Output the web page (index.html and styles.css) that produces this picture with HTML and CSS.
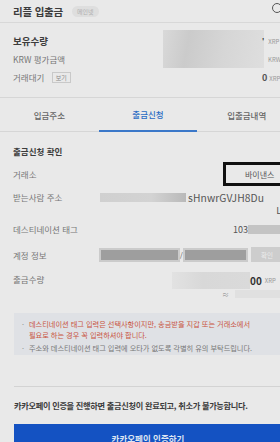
FILE: index.html
```html
<!DOCTYPE html>
<html lang="ko">
<head>
    <meta charset="UTF-8">
    <meta name="viewport" content="width=device-width, initial-scale=1.0">
    <title>리플 입출금</title>
    <link rel="stylesheet" href="styles.css">
</head>
<body>
    <div class="page">
        <div class="header">
            <h1>리플 입출금</h1>
            <span class="badge">메인넷</span>
            <span class="search-icon"></span>
        </div>

        <div class="holdings">
            <div class="holdings-labels">
                <p class="label-strong">보유수량</p>
                <p class="label">KRW 평가금액</p>
                <p class="label">거래대기 <span class="small-btn">보기</span></p>
            </div>
            <div class="holdings-blur"></div>
            <div class="holdings-units">
                <p><b class="tick">'</b><span>XRP</span></p>
                <p class="unit-krw"><span>KRW</span></p>
                <p><b>0</b><span>XRP</span></p>
            </div>
        </div>

        <div class="tabs">
            <div class="tab">입금주소</div>
            <div class="tab active">출금신청</div>
            <div class="tab">입출금내역</div>
        </div>

        <div class="confirm">
            <h2>출금신청 확인</h2>

            <div class="row row-exchange">
                <span class="label">거래소</span>
                <div class="exchange-box">바이낸스</div>
            </div>

            <div class="row row-address">
                <span class="label">받는사람 주소</span>
                <div class="address">
                    <div class="address-line"><span class="blur blur-address"></span><span>sHnwrGVJH8Du</span></div>
                    <div class="address-end">Ll</div>
                </div>
            </div>

            <div class="row row-tag">
                <span class="label">데스티네이션 태그</span>
                <div class="value-right"><span>103</span><span class="blur blur-tag"></span></div>
            </div>

            <div class="row row-account">
                <span class="label">계정 정보</span>
                <div class="account">
                    <span class="field field-a"></span>
                    <span class="slash">/</span>
                    <span class="field field-b"></span>
                    <span class="check-btn">확인</span>
                </div>
            </div>

            <div class="row row-amount">
                <span class="label">출금수량</span>
                <div class="amount">
                    <div class="amount-main"><span class="blur blur-amount"></span><b>00</b><span class="unit">XRP</span></div>
                    <div class="amount-sub"><span>≈</span><span class="blur blur-krw"></span><span class="unit">KRW</span></div>
                </div>
            </div>
        </div>

        <div class="notice">
            <p class="notice-red">데스티네이션 태그 입력은 선택사항이지만, 송금받을 지갑 또는 거래소에서<br>필요로 하는 경우 꼭 입력하셔야 합니다.</p>
            <p>주소와 데스티네이션 태그 입력에 오타가 없도록 각별히 유의 부탁드립니다.</p>
        </div>

        <div class="divider"></div>

        <p class="final-note">카카오페이 인증을 진행하면 출금신청이 완료되고, 취소가 불가능합니다.</p>

        <div class="submit">카카오페이 인증하기</div>
    </div>
</body>
</html>
```

FILE: styles.css
```css
* {
    margin: 0;
    padding: 0;
    box-sizing: border-box;
}

body {
    font-family: 'Noto Sans CJK KR', 'Noto Sans', sans-serif;
    background: #e9e9e9;
    color: #4a4a4a;
    overflow: hidden;
    width: 280px;
    height: 442px;
}

.page {
    width: 296px;
    background: #e9e9e9;
}

/* header */
.header {
    height: 23px;
    display: flex;
    align-items: center;
    padding: 0 13px;
    border-bottom: 1px solid #d8d8d8;
    position: relative;
}

h1 {
    font-size: 10.5px;
    font-weight: 700;
    color: #3c3c3c;
    letter-spacing: -0.2px;
}

.badge {
    margin-left: 9px;
    font-size: 6px;
    color: #b0b0b0;
    background: #dedede;
    border-radius: 6px;
    padding: 1px 5px;
    line-height: 9px;
}

.search-icon {
    position: absolute;
    left: 272px;
    top: 3px;
    width: 10px;
    height: 10px;
    border: 1.6px solid #555;
    border-radius: 50%;
}

/* holdings */
.holdings {
    display: flex;
    padding: 12px 0 0 13px;
    height: 75px;
    border-bottom: 1px solid #d6d6d6;
}

.holdings-labels {
    width: 150px;
    flex-shrink: 0;
    display: flex;
    flex-direction: column;
    gap: 5px;
}

.holdings-labels p {
    height: 13px;
    line-height: 13px;
}

.label-strong {
    font-size: 9.5px;
    font-weight: 700;
    color: #3c3c3c;
}

.label {
    font-size: 8.5px;
    color: #777;
}

.small-btn {
    display: inline-block;
    margin-left: 5px;
    font-size: 6px;
    line-height: 9px;
    padding: 0 3px;
    border: 1px solid #c9c9c9;
    color: #888;
    vertical-align: 1px;
}

.holdings-blur {
    width: 101px;
    flex-shrink: 0;
    height: 38px;
    margin-top: -5px;
    background: linear-gradient(100deg, #d9d9d9 0%, #cbcbcb 25%, #d6d6d6 60%, #dedede 100%);
}

.holdings-units {
    margin-left: -2px;
    display: flex;
    flex-direction: column;
    gap: 5px;
}

.holdings-units p {
    height: 13px;
    line-height: 13px;
    font-size: 6px;
    color: #999;
    white-space: nowrap;
}

.holdings-units b {
    font-size: 9px;
    color: #555;
    margin-right: 2px;
}

.holdings-units .tick {
    font-size: 7px;
    color: #333;
    margin-right: 4px;
}

.holdings-units .unit-krw {
    padding-left: 6px;
}

/* tabs */
.tabs {
    display: flex;
    height: 34px;
    border-bottom: 1px solid #d6d6d6;
}

.tab {
    flex: 1;
    display: flex;
    align-items: center;
    justify-content: center;
    font-size: 8.5px;
    color: #666;
    font-weight: 500;
}

.tab.active {
    color: #2b6cc4;
    border-bottom: 2px solid #3b78c9;
    margin-bottom: -1px;
}

/* confirm */
.confirm {
    padding: 13px 0 0 13px;
}

h2 {
    font-size: 8.5px;
    font-weight: 700;
    color: #3c3c3c;
    line-height: 12px;
}

.row {
    display: flex;
    align-items: flex-start;
}

.row > .label {
    width: 87px;
    flex-shrink: 0;
    font-size: 8.5px;
    color: #777;
    line-height: 12px;
}

.row-exchange {
    margin-top: 5px;
    align-items: center;
}

.exchange-box {
    margin-left: 123px;
    width: 60px;
    height: 24px;
    border: 3px solid #111;
    border-right: none;
    font-size: 8px;
    color: #555;
    display: flex;
    align-items: center;
    padding-left: 19px;
    white-space: nowrap;
}

.row-address {
    margin-top: 5px;
}

.address {
    flex: 1;
}

.address-line {
    display: flex;
    align-items: center;
    height: 13px;
    font-size: 10.3px;
    color: #555;
    white-space: nowrap;
    letter-spacing: 0.1px;
}

.blur {
    display: inline-block;
    background: #cfcfcf;
}

.blur-address {
    width: 86px;
    height: 9px;
    margin-right: 2px;
    background: linear-gradient(90deg, #d0d0d0, #d3d3d3 60%, #b9b9b9);
}

.address-end {
    text-align: right;
    padding-right: 12px;
    font-size: 9.5px;
    color: #555;
    line-height: 12px;
}

.row-tag {
    margin-top: 7px;
}

.value-right {
    margin-left: 133px;
    display: flex;
    align-items: center;
    height: 12px;
    font-size: 9px;
    color: #555;
}

.blur-tag {
    width: 50px;
    height: 9px;
    background: #c4c4c4;
}

.row-account {
    margin-top: 12px;
    align-items: center;
}

.account {
    display: flex;
    align-items: center;
    margin-left: -1px;
}

.field {
    height: 14px;
    border: 2px solid #cbcbcb;
    background: #9e9e9e;
}

.field-a {
    width: 81px;
}

.field-b {
    width: 65px;
}

.slash {
    font-size: 7px;
    color: #555;
    width: 3px;
}

.check-btn {
    margin-left: 3px;
    width: 32px;
    height: 15px;
    background: #cdcdcd;
    color: #ececec;
    font-size: 6.5px;
    display: flex;
    align-items: center;
    justify-content: center;
}

.row-amount {
    margin-top: 11px;
}

.amount {
    flex: 1;
}

.amount-main {
    display: flex;
    align-items: center;
    height: 15px;
    margin-left: 72px;
}

.blur-amount {
    width: 78px;
    height: 17px;
    background: linear-gradient(90deg, #e2e2e2, #d8d8d8 40%, #dadada);
}

.amount-main b {
    font-size: 10px;
    color: #333;
}

.unit {
    font-size: 6px;
    color: #999;
    margin-left: 3px;
}

.amount-sub {
    display: flex;
    align-items: center;
    height: 11px;
    margin-left: 122px;
    font-size: 7px;
    color: #888;
}

.blur-krw {
    width: 60px;
    height: 8px;
    margin-left: 6px;
    background: #e0e0e0;
}

/* notice */
.notice {
    margin: 14px 14px 0 14px;
    background: #dfe1e5;
    padding: 6px 4px 6px 8px;
    height: 42px;
}

.notice p {
    font-size: 7.2px;
    line-height: 11px;
    color: #777;
    padding-left: 7px;
    position: relative;
    white-space: nowrap;
}

.notice p::before {
    content: '·';
    position: absolute;
    left: 0;
    color: #888;
}

.notice .notice-red {
    color: #c9543f;
    line-height: 11px;
    margin-bottom: 2px;
}

.divider {
    margin: 31px 14px 0 14px;
    border-top: 1px solid #d3d3d3;
}

.final-note {
    margin: 12px 0 0 14px;
    font-size: 8.2px;
    font-weight: 700;
    color: #3c3c3c;
    line-height: 12px;
    white-space: nowrap;
    letter-spacing: -0.3px;
}

.submit {
    margin: 13px 14px 0 14px;
    height: 36px;
    background: #1452c2;
    color: #dfe6f3;
    font-size: 8.5px;
    font-weight: 700;
    display: flex;
    align-items: flex-start;
    justify-content: center;
    padding-top: 8px;
}
```
